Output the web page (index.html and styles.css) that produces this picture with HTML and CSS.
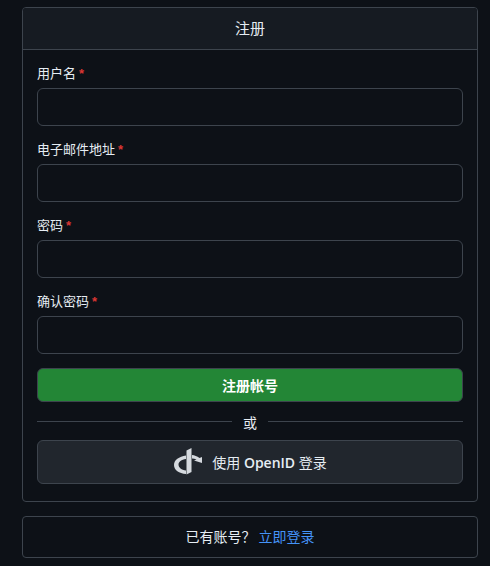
FILE: index.html
```html
<!DOCTYPE html>
<html lang="zh-CN">
<head>
    <meta charset="UTF-8">
    <title>注册</title>
    <link rel="stylesheet" href="styles.css">
</head>
<body>
    <div class="card">
        <div class="card-header">注册</div>
        <form class="card-body">
            <div class="field">
                <label>用户名<span class="req">*</span></label>
                <input type="text">
            </div>
            <div class="field">
                <label>电子邮件地址<span class="req">*</span></label>
                <input type="text">
            </div>
            <div class="field">
                <label>密码<span class="req">*</span></label>
                <input type="password">
            </div>
            <div class="field">
                <label>确认密码<span class="req">*</span></label>
                <input type="password">
            </div>
            <button type="button" class="btn-primary">注册帐号</button>
            <div class="divider"><span>或</span></div>
            <button type="button" class="btn-openid">
                <svg class="openid-icon" viewBox="0 0 30 28" width="30" height="28">
                    <path fill="#d5d9de" d="M13.500 3.500L18.500 1V25L13.500 27.500z"/>
                    <path fill="#d5d9de" d="M13 8.500C6 9.500 1 13 1 18C1 23 6 26.500 13 27V23.500C8.500 23 5.500 20.500 5.500 17.500C5.500 15 8.500 12.500 13 12z"/>
                    <path fill="#d5d9de" d="M19 8C21.500 8.200 24 9.200 26.500 11L29 10V16L21 13.500L23.500 12.500C22 11.800 20.500 11.500 19 11.500z"/>
                </svg>
                <span>使用 <span class="latin">OpenID</span> 登录</span>
            </button>
        </form>
    </div>
    <div class="card login-link">
        已有账号？<a href="#">立即登录</a>
    </div>
</body>
</html>
```
FILE: styles.css
```css
* {
    box-sizing: border-box;
}
body {
    margin: 0;
    padding: 7px 12px 0 22px;
    background-color: #0d1117;
    color: #e6edf3;
    font-family: "Open Sans", "Noto Sans CJK SC", sans-serif;
    font-size: 14px;
    overflow: hidden;
}
.card {
    border: 1px solid #3d444d;
    border-radius: 4px;
}
.card-header {
    height: 42px;
    line-height: 40px;
    text-align: center;
    font-size: 15px;
    background-color: #161b22;
    border-bottom: 1px solid #3d444d;
    border-radius: 3px 3px 0 0;
}
.card-body {
    display: flex;
    flex-direction: column;
    padding: 14px 14px 17px;
}
.field {
    margin-bottom: 14px;
}
.field label {
    display: block;
    height: 24px;
    line-height: 18px;
    font-size: 13px;
}
.req {
    color: #da3633;
    font-family: "Liberation Sans", sans-serif;
    font-weight: bold;
    margin-left: 3px;
}
.field input {
    display: block;
    width: 100%;
    height: 38px;
    background-color: #0d1117;
    border: 1px solid #3d444d;
    border-radius: 6px;
    color: #e6edf3;
}
.btn-primary {
    height: 34px;
    background-color: #238636;
    border: 1px solid #3d444d;
    border-radius: 6px;
    color: #fff;
    font: inherit;
    font-weight: 600;
}
.divider {
    display: flex;
    align-items: center;
    gap: 11px;
    margin: 9px 0 8px;
    height: 21px;
}
.divider::before,
.divider::after {
    content: "";
    flex: 1;
    border-top: 1px solid #3d444d;
}
.btn-openid {
    display: flex;
    align-items: center;
    justify-content: center;
    gap: 9px;
    height: 44px;
    background-color: #21262d;
    border: 1px solid #3d444d;
    border-radius: 6px;
    color: #e6edf3;
    font: inherit;
}
.latin {
    font-weight: 600;
}
.openid-icon {
    display: block;
    margin-bottom: 2px;
}
.login-link {
    margin-top: 14px;
    height: 42px;
    line-height: 40px;
    text-align: center;
}
.login-link a {
    color: #4493f8;
    text-decoration: none;
    margin-left: 3px;
}
```
